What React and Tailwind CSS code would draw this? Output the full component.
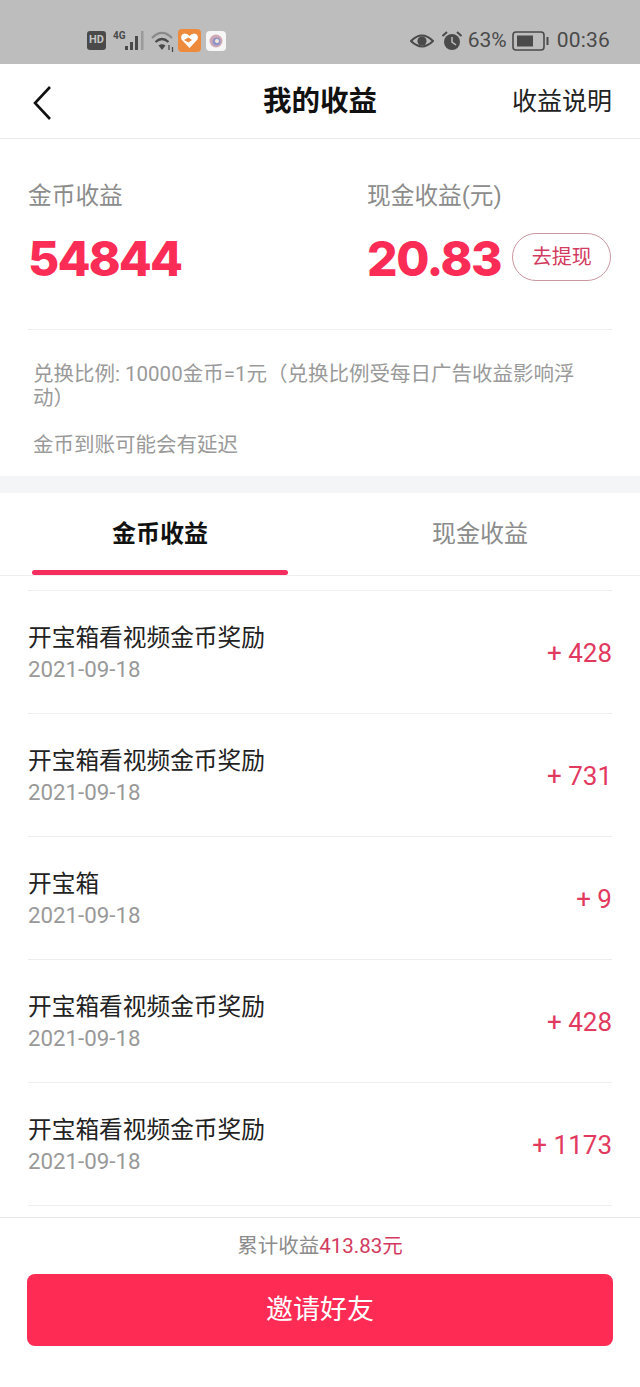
const records = [
  { title: "开宝箱看视频金币奖励", date: "2021-09-18", amount: "+ 428" },
  { title: "开宝箱看视频金币奖励", date: "2021-09-18", amount: "+ 731" },
  { title: "开宝箱", date: "2021-09-18", amount: "+ 9" },
  { title: "开宝箱看视频金币奖励", date: "2021-09-18", amount: "+ 428" },
  { title: "开宝箱看视频金币奖励", date: "2021-09-18", amount: "+ 1173" },
];

const fontStack = {
  fontFamily: '"Roboto", "Noto Sans CJK SC", sans-serif',
};

function StatusBar() {
  return (
    <div className="h-16 bg-[#bdbdbd] flex items-center justify-between pl-[87px] pr-[30px] pt-[17px]">
      <div className="flex items-center">
        <div className="w-[19px] h-[19px] rounded-[3px] bg-[#4a4a4a] text-[#c4c4c4] text-[11px] font-bold flex items-center justify-center">
          HD
        </div>
        <svg width="33" height="22" viewBox="0 0 33 22" className="ml-[7px]">
          <text x="0" y="9" fontSize="10" fontWeight="700" fill="#4a4a4a" fontFamily="Roboto">4G</text>
          <rect x="12" y="16" width="3" height="4" fill="#4a4a4a" />
          <rect x="17" y="12" width="3" height="8" fill="#4a4a4a" />
          <rect x="22" y="6" width="3" height="14" fill="#4a4a4a" />
          <rect x="28" y="1" width="2.5" height="19" fill="#9a9a9a" />
        </svg>
        <svg width="24" height="22" viewBox="0 0 24 22" className="ml-[5px]">
          <path d="M1 8 Q11 -2 21 8" fill="none" stroke="#8a8a8a" strokeWidth="2.2" />
          <path d="M4.5 12 Q11 6 17.5 12" fill="none" stroke="#4a4a4a" strokeWidth="2.2" />
          <path d="M7.5 15.5 Q11 13 14.5 15.5 L11 20 Z" fill="#4a4a4a" />
          <path d="M18 15 v5 M21.5 17 v5" stroke="#4a4a4a" strokeWidth="1.3" fill="none" />
        </svg>
        <svg width="23" height="23" viewBox="0 0 23 23" className="ml-[3px]">
          <rect width="23" height="23" rx="4" fill="#ee8a3c" />
          <path d="M11.5 19 L3.5 10.5 Q2 5.5 6.5 4.5 Q10 4.5 11.5 7 Q13 4.5 16.5 4.5 Q21 5.5 19.5 10.5 Z" fill="#fff" />
          <path d="M6 11 L10.5 8.5 L14 11 L10.5 13.5 Z" fill="#ee8a3c" />
        </svg>
        <svg width="20" height="20" viewBox="0 0 20 20" className="ml-[5px]">
          <rect width="20" height="20" rx="4" fill="#f6f6f6" />
          <circle cx="10" cy="10" r="6.5" fill="#d0a9b4" />
          <circle cx="10.5" cy="10.5" r="4" fill="#8f95c9" />
          <circle cx="11" cy="10" r="2" fill="#f2e6d8" />
        </svg>
      </div>
      <div className="flex items-center text-[#4a4a4a]">
        <svg width="24" height="16" viewBox="0 0 24 16">
          <path d="M1 8 Q12 -3 23 8 Q12 19 1 8 Z" fill="none" stroke="#4a4a4a" strokeWidth="2" />
          <circle cx="12" cy="8" r="4.6" fill="#4a4a4a" />
        </svg>
        <svg width="22" height="22" viewBox="0 0 22 22" className="ml-[7px]">
          <circle cx="11" cy="12" r="8" fill="#4a4a4a" />
          <path d="M11 7 V12 L15 15" fill="none" stroke="#bdbdbd" strokeWidth="1.5" />
          <path d="M1.5 6 L6 2 M20.5 6 L16 2" stroke="#4a4a4a" strokeWidth="2" />
        </svg>
        <span className="ml-[5px] text-[21px] leading-none">63%</span>
        <svg width="37" height="20" viewBox="0 0 37 20" className="ml-[5px]">
          <rect x="1" y="1" width="31" height="18" rx="3" fill="none" stroke="#4a4a4a" strokeWidth="1.6" />
          <rect x="5" y="4.5" width="16" height="11" fill="#4a4a4a" />
          <rect x="34.5" y="6" width="2" height="8" fill="#4a4a4a" />
        </svg>
        <span className="ml-[8px] text-[21px] leading-none tracking-[0.2px]">00:36</span>
      </div>
    </div>
  );
}

function NavBar() {
  return (
    <div className="h-[75px] grid grid-cols-[1fr_auto_1fr] items-center border-b border-[#ececec] pl-[32px] pr-[28px] pt-[3px]">
      <svg width="20" height="36" viewBox="0 0 20 36">
        <path d="M18 2 L3 18 L18 34" fill="none" stroke="#111" strokeWidth="2.6" />
      </svg>
      <div className="text-[28.5px] font-bold text-[#111] -ml-[4px]">我的收益</div>
      <div className="text-[25px] text-[#222] text-right -mt-[1px]">收益说明</div>
    </div>
  );
}

function Summary() {
  const numberFont = { fontFamily: '"Inter", sans-serif' };
  return (
    <div className="px-[28px] pt-[40px]">
      <div className="flex h-[151px] border-b border-[#eeeeee]">
        <div className="w-[339px] shrink-0">
          <div className="text-[23.7px] leading-[34px] text-[#8c8c8c]">金币收益</div>
          <div className="mt-[16px] text-[48px] leading-[60px] font-extrabold tracking-[-1.8px] text-[#fb2c55]" style={numberFont}>54844</div>
        </div>
        <div className="whitespace-nowrap">
          <div className="text-[23.7px] leading-[34px] text-[#8c8c8c]">现金收益(元)</div>
          <div className="mt-[16px] flex items-center">
            <div className="text-[48px] leading-[60px] font-extrabold tracking-[-1.4px] text-[#fb2c55]" style={numberFont}>20.83</div>
            <div className="ml-[11px] mb-[5px] shrink-0 w-[99px] h-[48px] rounded-full border border-[#c9979f] text-[20px] text-[#d33a60] flex items-center justify-center">
              去提现
            </div>
          </div>
        </div>
      </div>
      <div className="pl-[5px] pt-[32px] pb-[19px] text-[20.5px] leading-[24px] text-[#9a9a9a]">
        <p className="max-w-[550px]">兑换比例: 10000金币=1元（兑换比例受每日广告收益影响浮动）</p>
        <p className="mt-[23px]">金币到账可能会有延迟</p>
      </div>
    </div>
  );
}

function Tabs() {
  return (
    <div className="relative h-[83px] flex border-b border-[#eeeeee]">
      <div className="w-[320px] text-center text-[24px] leading-[82px] font-bold text-[#111]">金币收益</div>
      <div className="w-[320px] text-center text-[24px] leading-[82px] text-[#8c8c8c]">现金收益</div>
      <div className="absolute left-[32px] bottom-0 w-[256px] h-[5px] rounded-full bg-[#f62e5d]"></div>
    </div>
  );
}

function RecordRow({ record }) {
  return (
    <div className="h-[123px] border-b border-[#eeeeee] flex items-center justify-between">
      <div>
        <div className="text-[23.7px] leading-[32px] text-[#222]">{record.title}</div>
        <div className="mt-[2px] text-[22.3px] leading-[26px] text-[#999999]">{record.date}</div>
      </div>
      <div className="mt-[2px] text-[26px] text-[#e2395f]">{record.amount}</div>
    </div>
  );
}

export default function App() {
  return (
    <div className="w-[640px] h-[1387px] bg-white flex flex-col overflow-hidden" style={fontStack}>
      <StatusBar />
      <NavBar />
      <Summary />
      <div className="h-[17px] bg-[#f4f5f6]"></div>
      <Tabs />
      <div className="flex-1 px-[28px] pt-[14px] overflow-hidden">
        <div className="border-t border-[#eeeeee]">
          {records.map((record, i) => (
            <RecordRow key={i} record={record} />
          ))}
        </div>
      </div>
      <div className="h-[170px] border-t border-[#e6e6e6] px-[27px]">
        <div className="pt-[14px] text-center text-[20.5px] leading-[28px] text-[#8c8c8c]">
          累计收益<span className="text-[#d33a60]">413.83元</span>
        </div>
        <button className="mt-[14px] w-full h-[72px] rounded-[8px] bg-[#fe2c55] text-white text-[27px]">
          邀请好友
        </button>
      </div>
    </div>
  );
}
